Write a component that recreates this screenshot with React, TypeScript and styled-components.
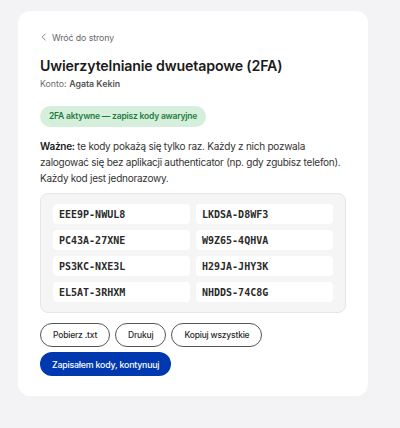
import * as React from 'react';
import styled, { createGlobalStyle } from 'styled-components';

const codes = [
  'EEE9P-NWUL8',
  'LKDSA-D8WF3',
  'PC43A-27XNE',
  'W9Z65-4QHVA',
  'PS3KC-NXE3L',
  'H29JA-JHY3K',
  'EL5AT-3RHXM',
  'NHDDS-74C8G',
];

export default function App() {
  return (
    <>
      <GlobalStyle />
      <Page>
        <Card>
          <BackLink href="#">
            <svg width="8" height="8" viewBox="0 0 8 8" fill="none">
              <path d="M5.2 1L2.2 4l3 3" stroke="#777" strokeWidth="0.9" strokeLinecap="round" strokeLinejoin="round" />
            </svg>
            Wróć do strony
          </BackLink>
          <Title>Uwierzytelnianie dwuetapowe (2FA)</Title>
          <Account>
            Konto: <strong>Agata Kekin</strong>
          </Account>
          <Badge>2FA aktywne — zapisz kody awaryjne</Badge>
          <Notice>
            <strong>Ważne:</strong> te kody pokażą się tylko raz. Każdy z nich pozwala
            zalogować się bez aplikacji authenticator (np. gdy zgubisz telefon).
            Każdy kod jest jednorazowy.
          </Notice>
          <CodeBox>
            {codes.map((c) => (
              <Code key={c}>{c}</Code>
            ))}
          </CodeBox>
          <Actions>
            <OutlineButton>Pobierz .txt</OutlineButton>
            <OutlineButton>Drukuj</OutlineButton>
            <OutlineButton>Kopiuj wszystkie</OutlineButton>
          </Actions>
          <PrimaryButton>Zapisałem kody, kontynuuj</PrimaryButton>
        </Card>
      </Page>
    </>
  );
}

const GlobalStyle = createGlobalStyle`
  html, body {
    margin: 0;
    background: #f3f3f5;
    font-family: Inter, "Noto Sans", sans-serif;
    color: #1c1c1e;
  }
`;
const Page = styled.div`
  padding: 11px 18px;
  min-height: 428px;
  box-sizing: border-box;
`;
const Card = styled.div`
  width: 350px;
  box-sizing: border-box;
  background: #fff;
  border-radius: 12px;
  padding: 20px 22px 20px;
  display: flex;
  flex-direction: column;
  align-items: flex-start;
`;
const BackLink = styled.a`
  display: flex;
  align-items: center;
  gap: 4px;
  height: 12px;
  font-size: 8.8px;
  letter-spacing: -0.1px;
  color: #666;
  text-decoration: none;
`;
const Title = styled.h1`
  margin: 14px 0 0;
  font-size: 14.2px;
  line-height: 18px;
  font-weight: 600;
  letter-spacing: -0.15px;
  color: #1a1a1a;
`;
const Account = styled.div`
  margin-top: 3px;
  font-size: 8.8px;
  line-height: 12px;
  color: #6b6b6b;
  strong {
    font-weight: 600;
    color: #555;
  }
`;
const Badge = styled.div`
  margin-top: 16px;
  padding: 5px 9px;
  line-height: 11px;
  border-radius: 999px;
  background: #d5efdc;
  color: #1f7d40;
  font-size: 8.5px;
  letter-spacing: -0.2px;
  font-weight: 600;
`;
const Notice = styled.p`
  margin: 11px 0 0;
  font-size: 10px;
  line-height: 16px;
  letter-spacing: -0.25px;
  color: #333;
  strong {
    font-weight: 600;
    color: #1a1a1a;
  }
`;
const CodeBox = styled.div`
  margin-top: 7px;
  width: 100%;
  box-sizing: border-box;
  padding: 10px 12px;
  background: #f5f5f6;
  border: 1px solid #e6e6e8;
  border-radius: 8px;
  display: grid;
  grid-template-columns: 1fr 1fr;
  gap: 6px;
`;
const Code = styled.div`
  height: 20px;
  display: flex;
  align-items: center;
  padding: 0 6px;
  background: #fff;
  border-radius: 4px;
  font-family: "DejaVu Sans Mono", "Liberation Mono", monospace;
  font-weight: 700;
  font-size: 10px;
  color: #2a2a2a;
`;
const Actions = styled.div`
  margin-top: 10px;
  display: flex;
  gap: 5px;
`;
const OutlineButton = styled.button`
  height: 24px;
  padding: 0 12px;
  border: 1px solid #555;
  border-radius: 999px;
  background: #fff;
  font-family: inherit;
  font-size: 8.5px;
  letter-spacing: -0.2px;
  font-weight: 500;
  color: #2a2a2a;
`;
const PrimaryButton = styled.button`
  margin-top: 5px;
  height: 24px;
  padding: 0 12px;
  border: none;
  border-radius: 999px;
  background: #0038b0;
  color: #fff;
  font-family: inherit;
  font-size: 8.8px;
  letter-spacing: -0.2px;
  font-weight: 500;
`;
